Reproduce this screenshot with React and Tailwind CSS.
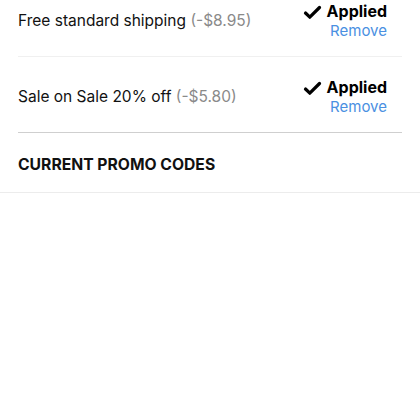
import React from 'react';

const promos = [
    { name: 'Free standard shipping', amount: '(-$8.95)' },
    { name: 'Sale on Sale 20% off', amount: '(-$5.80)' },
];

function Check() {
    return (
        <svg width="19" height="16" viewBox="0 0 19 16" className="mr-[5px] mt-[2px]">
            <path d="M2.5 9 L6.8 13.2 L16.5 3.5" fill="none" stroke="#000" strokeWidth="3.2" strokeLinecap="round" strokeLinejoin="round" />
        </svg>
    );
}

function PromoRow({ promo, last }) {
    return (
        <div className={`mx-[18px] flex items-center justify-between h-[76px] pt-[5px] border-b ${last ? 'border-[#cfcfcf]' : 'border-[#f0f0f0]'}`}>
            <div className="text-[15.5px] text-[#111]">
                {promo.name} <span className="text-[#8a8a8a]">{promo.amount}</span>
            </div>
            <div className="flex flex-col items-end mr-[15px]">
                <div className="flex items-center text-[16px] font-bold text-black leading-[20px]">
                    <Check />
                    Applied
                </div>
                <button type="button" className="text-[15px] text-[#4a90e2] leading-[20px]">Remove</button>
            </div>
        </div>
    );
}

export default function App() {
    return (
        <div className="w-[420px] h-[420px] overflow-hidden bg-white font-['Inter',sans-serif]">
            <div className="-mt-[19px]">
                {promos.map((p, i) => (
                    <PromoRow key={p.name} promo={p} last={i === promos.length - 1} />
                ))}
            </div>
            <div className="h-[60px] flex items-center px-[18px] pt-[4px] border-b border-[#ececec]">
                <h3 className="text-[15.7px] font-bold text-[#111]">CURRENT PROMO CODES</h3>
            </div>
        </div>
    );
}
